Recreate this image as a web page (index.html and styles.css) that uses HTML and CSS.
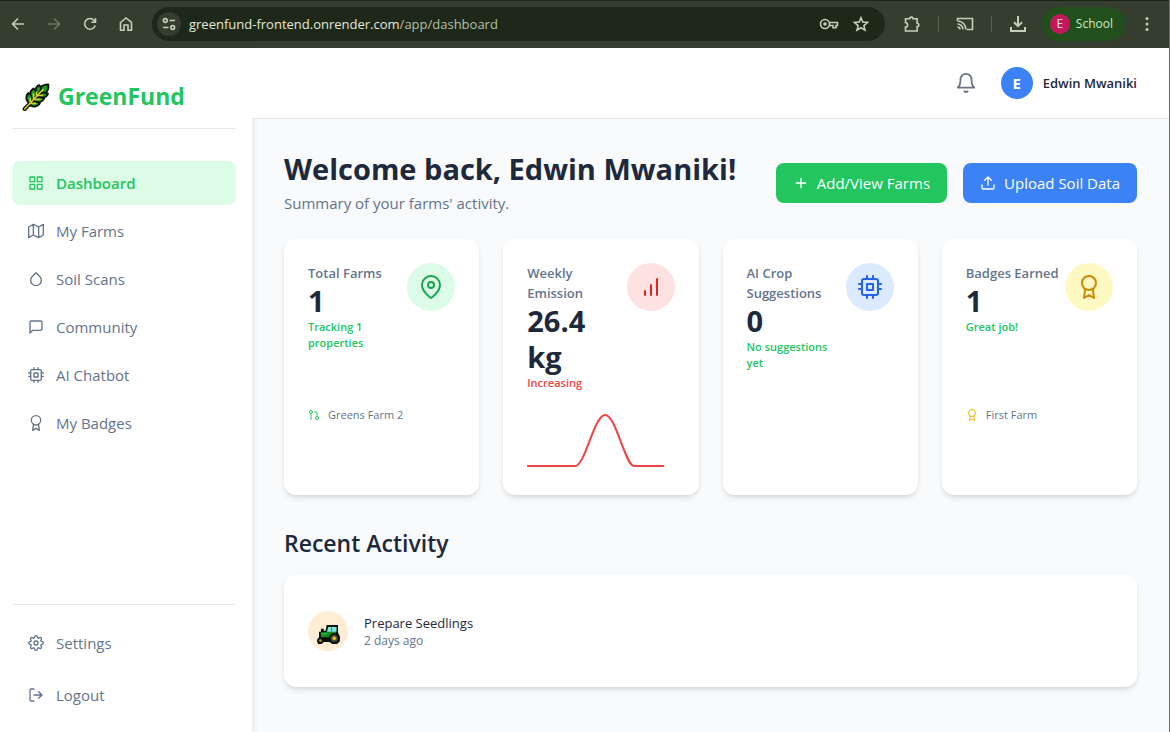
FILE: index.html
```html
<!DOCTYPE html>
<html lang="en">
<head>
<meta charset="utf-8">
<meta name="viewport" content="width=device-width, initial-scale=1">
<title>GreenFund Dashboard</title>
<link rel="stylesheet" href="styles.css">
</head>
<body>
<svg class="sprite" aria-hidden="true">
  <symbol id="award" viewBox="0 0 24 24"><circle cx="12" cy="8" r="7"/><polyline points="8.21 13.89 7 23 12 20 17 23 15.79 13.88"/></symbol>
  <symbol id="cpu" viewBox="0 0 24 24"><rect x="4" y="4" width="16" height="16" rx="2"/><rect x="9" y="9" width="6" height="6"/><path d="M9 1v3M15 1v3M9 20v3M15 20v3M20 9h3M20 14h3M1 9h3M1 14h3"/></symbol>
</svg>
<div class="window">
  <div class="toolbar">
    <button class="tool" aria-label="Back"><svg class="glyph" viewBox="0 0 16 16"><path d="M14 8H3M8 2.5 2.5 8 8 13.5"/></svg></button>
    <button class="tool dim" aria-label="Forward"><svg class="glyph" viewBox="0 0 16 16"><path d="M2 8h11M8 2.500 13.500 8 8 13.500"/></svg></button>
    <button class="tool" aria-label="Reload"><svg class="glyph" viewBox="0 0 16 16"><path d="M13.200 9.500A5.400 5.400 0 1 1 12.200 4.400L13.500 6M13.500 2v4.200H9.300"/></svg></button>
    <button class="tool" aria-label="Home"><svg class="glyph" viewBox="0 0 16 16"><path d="M2.500 6.500 8 2l5.500 4.500V14.200H10V9H6v5.200H2.500z"/></svg></button>
    <div class="address">
      <button class="site" aria-label="Site information"><svg class="glyph" viewBox="0 0 16 16"><circle cx="4.300" cy="4.500" r="1.900"/><path d="M8.500 4.500H14M2 11.500h5.500"/><circle cx="11.700" cy="11.500" r="1.900"/></svg></button>
      <div class="url">greenfund-frontend.onrender.com<span class="path">/app/dashboard</span></div>
      <button class="inner" aria-label="Passwords"><svg class="key" viewBox="0 0 20 16"><circle cx="6" cy="8" r="4.500"/><circle cx="6" cy="8" r="1" /><path d="M10.300 6.500H18.500v3H17v2.200h-3V9.500h-3.700"/></svg></button>
      <button class="inner" aria-label="Bookmark"><svg class="glyph" viewBox="0 0 16 16"><path d="m8 1.800 1.800 4.300 4.700.4-3.600 3.100 1.100 4.600L8 11.800l-4 2.400 1.100-4.600L1.500 6.500l4.700-.4z"/></svg></button>
    </div>
    <button class="tool first" aria-label="Extensions"><svg class="puzzle" viewBox="0 0 18 18"><path d="M2.500 3.800h4.200a1.700 1.700 0 0 1 3.400 0h4v4.400a1.700 1.700 0 0 1 0 3.400v4.400H2.500v-4a2.100 2.100 0 0 0 0-4.200z"/></svg></button>
    <span class="rule"></span>
    <button class="tool" aria-label="Cast"><svg class="puzzle" viewBox="0 0 18 18"><path d="M1.500 6V3.500h15v11H11M1.500 9a5.500 5.500 0 0 1 5.500 5.500M1.500 12a2.500 2.500 0 0 1 2.500 2.500M1.500 6a8.500 8.500 0 0 1 8.500 8.500"/></svg></button>
    <span class="rule"></span>
    <button class="tool" aria-label="Downloads"><svg class="puzzle heavy" viewBox="0 0 18 18"><path d="M9 1v10M5 7.200l4 4 4-4M2 12v4h14v-4"/></svg></button>
    <button class="profile"><span class="initial">E</span>School</button>
    <button class="menu" aria-label="Browser menu"><svg class="glyph dots" viewBox="0 0 16 16"><circle cx="8" cy="2.500" r="1.500"/><circle cx="8" cy="8" r="1.500"/><circle cx="8" cy="13.500" r="1.500"/></svg></button>
  </div>

  <div class="app">
    <aside class="sidebar">
      <div class="brand">
        <svg class="leaf" viewBox="0 0 28 28">
          <g fill="#1f9a22" stroke="#0a0f0a" stroke-width="1.800" stroke-linejoin="round">
            <path d="M18 8.500C17 4.500 19.500 1.500 26.300 1.300 27.200 6.500 25 10 20.500 10.500z"/>
            <path d="M15.500 11.500C12.500 8 13 4 17.200 2.200 19.500 4.500 19 8 17.500 10z"/>
            <path d="M11 16C7 12.500 7.500 8 11.500 5.500 14.500 7.500 15 11.500 13.500 14z"/>
            <path d="M8 20.500C3.500 18 3.200 13 6.500 10 10 12 11 16 9.500 19.500z"/>
            <path d="M17 11.500C19 9.500 23 9 26 10.500 25 14.500 20.500 15.500 16.500 13.500z"/>
            <path d="M13 15C15.500 13.500 20 14 22.300 15.500 20.500 19.500 16 20.500 12 18z"/>
            <path d="M9 19C12 18 15.500 18.700 17.800 20.500 15.500 24 11 24.500 7.500 22z"/>
          </g>
          <path fill="none" stroke="#0a0f0a" stroke-width="4" stroke-linecap="round" d="M2.600 26 8 20.500"/>
          <path fill="none" stroke="#d8cf2a" stroke-width="1.600" stroke-linecap="round" d="M2.600 26 21 6.500M14.500 13.500V9M15.500 12.500h5M11.500 16.500V11M12 16.500h6M8.200 20.200V15.500M8.500 20.500h5"/>
        </svg>
        <span>GreenFund</span>
      </div>
      <nav class="nav">
        <a class="link active" href="#dashboard"><svg class="icon" viewBox="0 0 24 24"><path d="M3 3h7v7H3zM14 3h7v7h-7zM14 14h7v7h-7zM3 14h7v7H3z"/></svg>Dashboard</a>
        <a class="link" href="#farms"><svg class="icon" viewBox="0 0 24 24"><path d="M1 6v16l7-4 8 4 7-4V2l-7 4-8-4zM8 2v16M16 6v16"/></svg>My Farms</a>
        <a class="link" href="#soil"><svg class="icon" viewBox="0 0 24 24"><path d="m12 2.690 5.660 5.660a8 8 0 1 1-11.310 0z"/></svg>Soil Scans</a>
        <a class="link" href="#community"><svg class="icon" viewBox="0 0 24 24"><path d="M21 15a2 2 0 0 1-2 2H7l-4 4V5a2 2 0 0 1 2-2h14a2 2 0 0 1 2 2z"/></svg>Community</a>
        <a class="link" href="#chatbot"><svg class="icon"><use href="#cpu"/></svg>AI Chatbot</a>
        <a class="link" href="#badges"><svg class="icon"><use href="#award"/></svg>My Badges</a>
      </nav>
      <div class="account">
        <a class="link" href="#settings"><svg class="icon" viewBox="0 0 24 24"><circle cx="12" cy="12" r="3"/><path d="M19.400 15a1.650 1.650 0 0 0 .33 1.820l.06.06a2 2 0 0 1 0 2.830 2 2 0 0 1-2.830 0l-.06-.06a1.650 1.650 0 0 0-1.820-.33 1.650 1.650 0 0 0-1 1.510V21a2 2 0 0 1-2 2 2 2 0 0 1-2-2v-.09A1.650 1.650 0 0 0 9 19.400a1.650 1.650 0 0 0-1.820.33l-.06.06a2 2 0 0 1-2.830 0 2 2 0 0 1 0-2.830l.06-.06a1.650 1.650 0 0 0 .33-1.820 1.650 1.650 0 0 0-1.510-1H3a2 2 0 0 1-2-2 2 2 0 0 1 2-2h.09A1.650 1.650 0 0 0 4.600 9a1.650 1.650 0 0 0-.33-1.820l-.06-.06a2 2 0 0 1 0-2.830 2 2 0 0 1 2.830 0l.06.06a1.650 1.650 0 0 0 1.820.33H9a1.650 1.650 0 0 0 1-1.510V3a2 2 0 0 1 2-2 2 2 0 0 1 2 2v.09a1.650 1.650 0 0 0 1 1.510 1.650 1.650 0 0 0 1.820-.33l.06-.06a2 2 0 0 1 2.830 0 2 2 0 0 1 0 2.830l-.06.06a1.650 1.650 0 0 0-.33 1.820V9a1.650 1.650 0 0 0 1.510 1H21a2 2 0 0 1 2 2 2 2 0 0 1-2 2h-.09a1.650 1.650 0 0 0-1.510 1z"/></svg>Settings</a>
        <a class="link" href="#logout"><svg class="icon" viewBox="0 0 24 24"><path d="M9 21H5a2 2 0 0 1-2-2V5a2 2 0 0 1 2-2h4M16 17l5-5-5-5M21 12H9"/></svg>Logout</a>
      </div>
    </aside>

    <div class="page">
      <header class="header">
        <button class="bell" aria-label="Notifications"><svg class="icon" viewBox="0 0 24 24"><path d="M18 8A6 6 0 0 0 6 8c0 7-3 9-3 9h18s-3-2-3-9M13.730 21a2 2 0 0 1-3.460 0"/></svg></button>
        <div class="user"><span class="avatar">E</span><span>Edwin Mwaniki</span></div>
      </header>
      <main class="main">
        <div class="intro">
          <div class="greeting">
            <h1>Welcome back, Edwin Mwaniki!</h1>
            <p>Summary of your farms' activity.</p>
          </div>
          <div class="actions">
            <button class="button green"><svg class="icon" viewBox="0 0 24 24"><path d="M12 5v14M5 12h14"/></svg>Add/View Farms</button>
            <button class="button blue"><svg class="icon" viewBox="0 0 24 24"><path d="M21 15v4a2 2 0 0 1-2 2H5a2 2 0 0 1-2-2v-4M17 8l-5-5-5 5M12 3v12"/></svg>Upload Soil Data</button>
          </div>
        </div>

        <div class="stats">
          <section class="card stat">
            <div class="top">
              <div><h3>Total Farms</h3><p class="value">1</p><p class="note">Tracking 1 properties</p></div>
              <span class="disc mint"><svg class="icon" viewBox="0 0 24 24"><path d="M21 10c0 7-9 13-9 13s-9-6-9-13a9 9 0 0 1 18 0z"/><circle cx="12" cy="10" r="3"/></svg></span>
            </div>
            <div class="extra"><div class="entry"><svg class="icon lime" viewBox="0 0 24 24"><circle cx="18" cy="18" r="3"/><circle cx="6" cy="6" r="3"/><path d="M13 6h3a2 2 0 0 1 2 2v7M6 9v12"/></svg>Greens Farm 2</div></div>
          </section>
          <section class="card stat">
            <div class="top">
              <div><h3>Weekly Emission</h3><p class="value">26.4 kg</p><p class="note up">Increasing</p></div>
              <span class="disc rose"><svg class="icon" viewBox="0 0 24 24"><path d="M12 20V10M18 20V4M6 20v-4"/></svg></span>
            </div>
            <div class="extra"><svg class="chart" viewBox="0 0 147 64" role="img" aria-label="Weekly emission trend"><path d="M0 59H48C58 59 67 8 78 8S98 59 107 59H137"/></svg></div>
          </section>
          <section class="card stat">
            <div class="top">
              <div><h3>AI Crop Suggestions</h3><p class="value">0</p><p class="note">No suggestions yet</p></div>
              <span class="disc sky"><svg class="icon"><use href="#cpu"/></svg></span>
            </div>
            <div class="extra"></div>
          </section>
          <section class="card stat">
            <div class="top">
              <div><h3>Badges Earned</h3><p class="value">1</p><p class="note">Great job!</p></div>
              <span class="disc gold"><svg class="icon"><use href="#award"/></svg></span>
            </div>
            <div class="extra"><div class="entry"><svg class="icon amber"><use href="#award"/></svg>First Farm</div></div>
          </section>
        </div>

        <h2>Recent Activity</h2>
        <section class="card activity">
          <div class="event">
            <span class="thumb"><svg class="tractor" viewBox="0 0 24 20"><path fill="#0a100a" d="M10 0h12v8l2 4v5l-3 3h-5l-3-2H7l-3 2H1l-1-4 2-3V7h2V4h3v2h2z"/><path fill="#158a21" d="M4 8h6V6h10v7H4z"/><path fill="#79e6e0" d="M11.500 2H15v5h-4.500zM15.500 2h5v5h-5z"/><path fill="#22b336" d="M4 8h7v2H4z"/><circle cx="18" cy="14" r="5.500" fill="#0a100a"/><circle cx="18" cy="14" r="3.800" fill="#454a42"/><circle cx="18" cy="14" r="1.900" fill="#f2c518"/><circle cx="3.500" cy="16.500" r="3.300" fill="#0a100a"/><circle cx="3.500" cy="16.500" r="1.500" fill="#a69a35"/></svg></span>
            <div><p class="name">Prepare Seedlings</p><p class="time">2 days ago</p></div>
          </div>
        </section>
      </main>
    </div>
  </div>
</div>
</body>
</html>
```
FILE: styles.css
```css
* { box-sizing: border-box; }
body, h1, h2, h3, p { margin: 0; }
body {
  font-family: "Open Sans", "Noto Sans", sans-serif;
  font-size: 15px;
  line-height: 24px;
  color: #1e293b;
  background: #f8fafc;
}
button { font: inherit; color: inherit; border: 0; padding: 0; background: none; cursor: pointer; }
a { color: inherit; text-decoration: none; }
.sprite { display: none; }
.window { display: flex; flex-direction: column; min-height: 100vh; border-right: 1px solid #6b6f6b; }

/* Browser toolbar */
.toolbar {
  display: flex;
  align-items: center;
  height: 48px;
  padding: 0 6px 1px 0;
  background: #343d2e;
  border-top: 1px solid #1c2617;
  color: #c3d0b8;
  font-size: 13px;
}
.toolbar svg { fill: none; stroke: currentColor; stroke-width: 1.6; }
.tool { display: grid; place-items: center; width: 36px; height: 34px; }
.tool.dim { color: #6d7766; }
.tool.first { margin-left: 9px; }
.glyph { width: 16px; height: 16px; }
.puzzle { width: 18px; height: 18px; }
.key { width: 20px; height: 16px; }
.toolbar .heavy { stroke-width: 2; }
.toolbar .dots { fill: currentColor; stroke: none; }
.address {
  display: flex;
  flex: 1;
  align-items: center;
  height: 34px;
  margin-left: 8px;
  padding: 0 8px 0 5px;
  border-radius: 17px;
  background: #1e2819;
}
.site { display: grid; place-items: center; width: 24px; height: 24px; border-radius: 50%; background: #343d2e; }
.url { flex: 1; margin-left: 8px; color: #e3e8dc; }
.path { color: #b4bfa9; }
.inner { display: grid; place-items: center; width: 32px; height: 32px; }
.rule { width: 1px; height: 16px; margin: 0 8px; background: #56614e; }
.profile {
  display: flex;
  align-items: center;
  gap: 6px;
  height: 34px;
  margin-left: 6px;
  padding: 0 12px 0 8px;
  border-radius: 17px;
  background: #22501d;
  color: #cfeac4;
  font-size: 12px;
}
.initial { width: 20px; border-radius: 50%; background: #c2185b; color: #f8dce8; line-height: 20px; text-align: center; }
.menu { display: grid; place-items: center; width: 32px; height: 32px; margin-left: 6px; }

/* App shell */
.app { display: flex; flex: 1; }
.icon { flex: none; width: 16px; height: 16px; fill: none; stroke: currentColor; stroke-width: 2; stroke-linecap: round; stroke-linejoin: round; }
.sidebar {
  display: flex;
  flex: none;
  flex-direction: column;
  width: 252px;
  padding: 16px 16px 15px 12px;
  background: #fff;
  box-shadow: 0 4px 8px rgba(15, 23, 42, 0.1);
}
.brand {
  display: flex;
  align-items: center;
  gap: 8px;
  padding: 16px 10px 15px;
  border-bottom: 1px solid #e5e7eb;
  color: #22c55e;
  font-size: 23px;
  font-weight: 700;
  line-height: 33px;
}
.leaf { width: 28px; height: 28px; }
.nav { display: flex; flex: 1; flex-direction: column; gap: 4px; padding-top: 32px; }
.link { display: flex; align-items: center; gap: 12px; padding: 10px 16px; border-radius: 8px; color: #64748b; }
.link.active { background: #dcfce7; color: #22c55e; font-weight: 600; }
.account { display: flex; flex-direction: column; gap: 8px; padding-top: 16px; border-top: 1px solid #e5e7eb; }
.page { flex: 1; min-width: 0; }
.header {
  display: flex;
  align-items: center;
  justify-content: flex-end;
  gap: 24px;
  padding: 19px 32px;
  border-bottom: 1px solid #e5e7eb;
  background: #fff;
}
.bell { display: flex; color: #6b7280; }
.bell .icon { width: 22px; height: 22px; }
.user { display: flex; align-items: center; gap: 10px; font-size: 13px; font-weight: 600; }
.avatar { width: 32px; border-radius: 50%; background: #3b82f6; color: #fff; font-size: 15px; font-weight: 700; line-height: 32px; text-align: center; }

/* Dashboard */
.main { padding: 32px; }
.intro { display: flex; align-items: center; justify-content: space-between; gap: 16px; margin-bottom: 24px; }
h1 { margin-bottom: 4px; font-size: 29px; font-weight: 700; line-height: 36px; }
.greeting p { color: #64748b; }
.actions { display: flex; gap: 16px; }
.button { display: flex; align-items: center; gap: 8px; padding: 8px 17px; border-radius: 8px; color: #fff; white-space: nowrap; }
.green { background: #22c55e; }
.blue { background: #3b82f6; }
.card { padding: 24px; border-radius: 12px; background: #fff; box-shadow: 0 4px 6px -1px rgba(0, 0, 0, 0.1), 0 2px 4px -2px rgba(0, 0, 0, 0.1); }
.stats { display: grid; grid-template-columns: repeat(4, minmax(0, 1fr)); gap: 24px; }
.stat { display: flex; flex-direction: column; justify-content: space-between; gap: 16px; }
.top { display: flex; align-items: flex-start; justify-content: space-between; gap: 4px; }
h3 { color: #64748b; font-size: 13px; font-weight: 600; line-height: 20px; }
.value { font-size: 29px; font-weight: 700; line-height: 36px; }
.note { color: #22c55e; font-size: 11px; font-weight: 600; line-height: 16px; }
.note.up { color: #ef4444; }
.disc { display: grid; flex: none; place-items: center; width: 48px; height: 48px; border-radius: 50%; }
.disc .icon { width: 24px; height: 24px; }
.mint { background: #dcfce7; color: #16a34a; }
.rose { background: #fee2e2; color: #dc2626; }
.sky { background: #dbeafe; color: #2563eb; }
.gold { background: #fef9c3; color: #ca8a04; }
.extra { height: 64px; }
.entry { display: flex; align-items: center; gap: 8px; color: #64748b; font-size: 11px; line-height: 16px; }
.entry .icon { width: 12px; height: 12px; }
.entry .lime { color: #22c55e; }
.entry .amber { color: #eab308; }
.chart { display: block; width: 100%; height: 64px; fill: none; stroke: #ef4444; stroke-width: 2; }
h2 { margin: 32px 0 16px; font-size: 23px; font-weight: 600; line-height: 32px; }
.event { display: flex; align-items: center; gap: 16px; padding: 12px 0; }
.thumb { display: grid; place-items: center; width: 40px; height: 40px; border-radius: 50%; background: #ffedd5; }
.tractor { width: 23px; height: 19px; margin-top: 6px; }
.name { font-size: 13px; line-height: 20px; }
.time { color: #64748b; font-size: 12px; line-height: 16px; }
```
